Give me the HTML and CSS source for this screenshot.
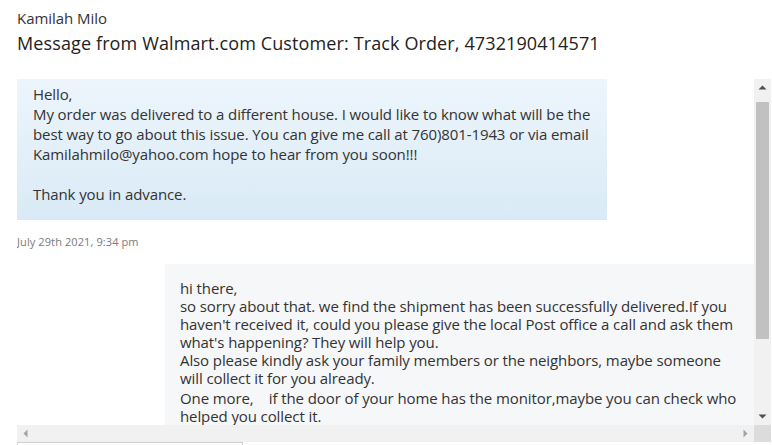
FILE: index.html
```html
<!DOCTYPE html>
<html>
<head>
<meta charset="utf-8">
<link rel="stylesheet" href="styles.css">
</head>
<body>
<div class="page">
  <div class="name">Kamilah Milo</div>
  <div class="subject">Message from Walmart.com Customer: Track Order, 4732190414571</div>
  <div class="thread">
    <div class="viewport">
      <div class="msg msg-customer">
        Hello,<br>
        My order was delivered to a different house. I would like to know what will be the<br>
        best way to go about this issue. You can give me call at 760)801-1943 or via email<br>
        Kamilahmilo@yahoo.com hope to hear from you soon!!!<br>
        <br>
        Thank you in advance.
      </div>
      <div class="date">July 29th 2021, 9:34 pm</div>
      <div class="msg msg-agent">
        <p>hi there,<br>
        so sorry about that. we find the shipment has been successfully delivered.If you<br>
        haven't received it, could you please give the local Post office a call and ask them<br>
        what's happening? They will help you.<br>
        Also please kindly ask your family members or the neighbors, maybe someone<br>
        will collect it for you already.</p>
        <p>One more,&nbsp;&nbsp;&nbsp; if the door of your home has the monitor,maybe you can check who<br>
        helped you collect it.</p>
      </div>
    </div>
    <div class="vbar">
      <div class="sb-btn">
        <svg width="17" height="17" viewBox="0 0 17 17"><polygon points="4.5,10.5 8.5,6.5 12.5,10.5" fill="#505050"/></svg>
      </div>
      <div class="vgap"></div>
      <div class="vthumb"></div>
      <div class="vtrack"></div>
      <div class="sb-btn">
        <svg width="17" height="17" viewBox="0 0 17 17"><polygon points="4.5,6.5 8.5,10.5 12.5,6.5" fill="#505050"/></svg>
      </div>
    </div>
    <div class="hbar">
      <div class="sb-btn">
        <svg width="17" height="17" viewBox="0 0 17 17"><polygon points="10.5,4.5 6.5,8.5 10.5,12.5" fill="#a3a3a3"/></svg>
      </div>
      <div class="htrack"></div>
      <div class="sb-btn">
        <svg width="17" height="17" viewBox="0 0 17 17"><polygon points="6.5,4.5 10.5,8.5 6.5,12.5" fill="#a3a3a3"/></svg>
      </div>
    </div>
    <div class="corner"></div>
  </div>
  <div class="reply"></div>
</div>
</body>
</html>
```
FILE: styles.css
```css
html, body {
  margin: 0;
  padding: 0;
  background: #fff;
  overflow: hidden;
}
body {
  font-family: "Open Sans", "Noto Sans", sans-serif;
  color: #333;
}
.page {
  padding: 8px 0 0 17px;
}
.name {
  font-size: 15px;
  line-height: 20px;
  letter-spacing: -0.05px;
  color: #333;
}
.subject {
  margin-top: 3px;
  font-size: 18px;
  line-height: 24px;
  letter-spacing: 0.12px;
  color: #222;
}
.thread {
  margin-top: 24px;
  display: grid;
  grid-template-columns: 737px 17px;
  grid-template-rows: 346px 17px;
  width: 754px;
}
.viewport {
  overflow: hidden;
}
.msg {
  font-size: 15px;
  letter-spacing: -0.1px;
  white-space: nowrap;
  color: #333;
}
.msg-customer {
  width: 590px;
  box-sizing: border-box;
  padding: 5px 16px 16px 16px;
  line-height: 20px;
  background: linear-gradient(to bottom, #edf5fc, #d9eaf6);
}
.date {
  font-size: 11px;
  line-height: 16px;
  letter-spacing: 0.1px;
  color: #7a7a7a;
  padding: 14px 0 14px 0;
}
.msg-agent {
  margin-left: 148px;
  padding: 15px;
  line-height: 18px;
  background: #f6f7f9;
}
.msg-agent p {
  margin: 0;
}
.msg-agent p + p {
  margin-top: 2px;
}

.vbar {
  display: flex;
  flex-direction: column;
  background: #f1f1f1;
}
.sb-btn {
  width: 17px;
  height: 17px;
  flex: none;
  background: #f1f1f1;
}
.sb-btn svg {
  display: block;
}
.vgap {
  height: 6px;
  flex: none;
}
.vthumb {
  height: 237px;
  margin: 0 2px;
  flex: none;
  background: #c1c1c1;
}
.vtrack {
  flex: 1;
}
.hbar {
  display: flex;
  background: #f1f1f1;
}
.htrack {
  flex: 1;
}
.corner {
  background: #dcdcdc;
}
.reply {
  width: 224px;
  height: 30px;
  border: 1px solid #cfcfcf;
}
```
